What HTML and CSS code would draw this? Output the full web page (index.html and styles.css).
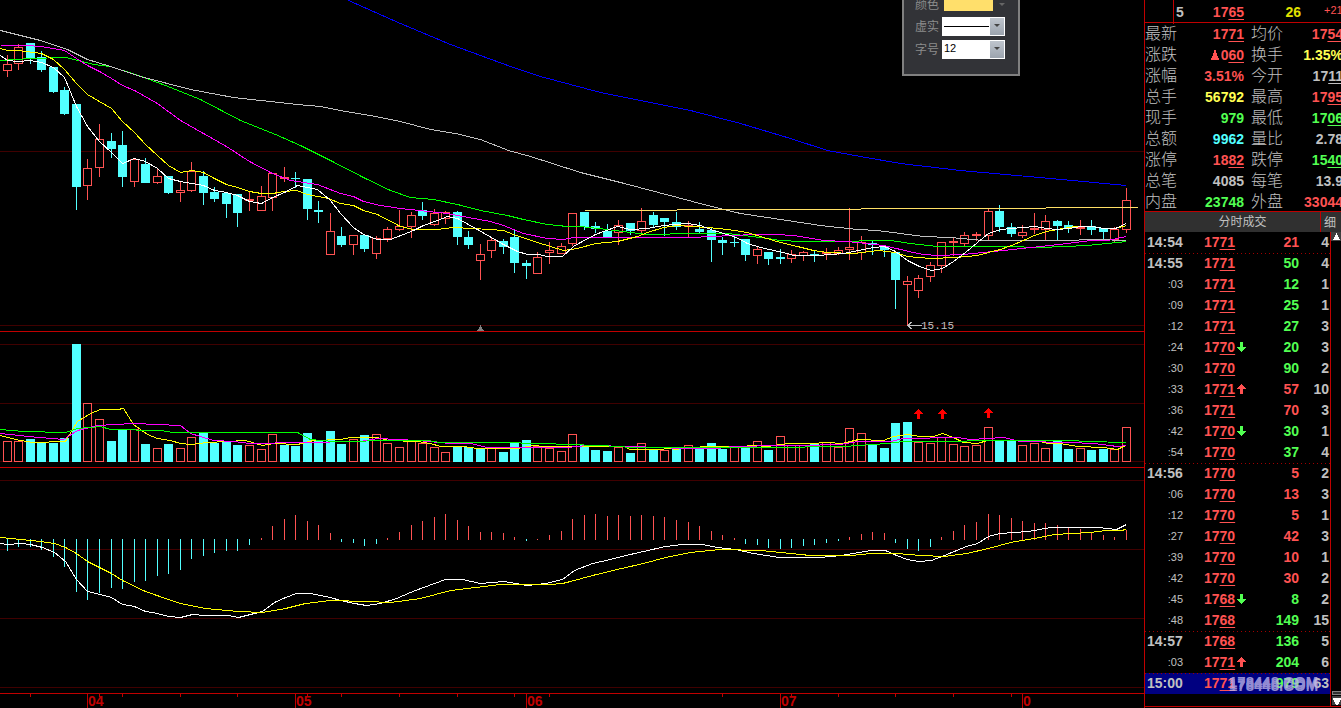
FILE: index.html
```html
<!DOCTYPE html>
<html lang="zh-CN">
<head>
<meta charset="utf-8">
<title>K线行情</title>
<link rel="stylesheet" href="styles.css">
</head>
<body>
<main class="terminal">
  <section class="charts" aria-label="K线图">
    <svg class="panel" id="price" viewBox="0 0 1144 332"></svg>
    <svg class="panel" id="volume" viewBox="0 332 1144 136"></svg>
    <svg class="panel" id="macd" viewBox="0 468 1144 226"></svg>
    <svg class="panel" id="axis" viewBox="0 694 1144 14"></svg>
    <form class="style-dialog">
      <div class="field">
        <label for="color">颜色</label>
        <button class="swatch" id="color" type="button" aria-label="颜色"></button>
        <span class="caret faint"></span>
      </div>
      <div class="field">
        <label for="dash">虚实</label>
        <span class="combo"><select class="line-select" id="dash"><option></option></select><span class="drop"><span class="caret"></span></span></span>
      </div>
      <div class="field">
        <label for="size">字号</label>
        <span class="combo"><select id="size"><option>12</option></select><span class="drop"><span class="caret"></span></span></span>
      </div>
    </form>
  </section>

  <aside class="quote">
    <div class="level">
      <span class="lv-no">5</span>
      <span class="lv-price red">17<u>65</u></span>
      <span class="lv-vol gold">26</span>
      <span class="lv-diff red">+21</span>
    </div>
    <dl class="stats">
      <dt>最新</dt><dd class="red">17<u>71</u></dd><dt>均价</dt><dd class="red">17<u>54</u></dd>
      <dt>涨跌</dt><dd class="red"><svg class="tri" viewBox="0 0 8 10"><path d="M3 0h2v3h1v3h1v2h1v2H0V8h1V6h1V3h1z"/></svg>0<u>60</u></dd><dt>换手</dt><dd class="yellow">1.35%</dd>
      <dt>涨幅</dt><dd class="red">3.51%</dd><dt>今开</dt><dd>17<u>11</u></dd>
      <dt>总手</dt><dd class="yellow">56792</dd><dt>最高</dt><dd class="red">17<u>95</u></dd>
      <dt>现手</dt><dd class="green">979</dd><dt>最低</dt><dd class="green">17<u>06</u></dd>
      <dt>总额</dt><dd class="cyan">9962</dd><dt>量比</dt><dd>2.78</dd>
      <dt>涨停</dt><dd class="red">18<u>82</u></dd><dt>跌停</dt><dd class="green">15<u>40</u></dd>
      <dt>总笔</dt><dd>4085</dd><dt>每笔</dt><dd>13.9</dd>
      <dt>内盘</dt><dd class="green">23748</dd><dt>外盘</dt><dd class="red">33044</dd>
    </dl>
    <header class="ticks-head"><h2>分时成交</h2><button type="button">细</button></header>
    <div class="ticks-wrap">
      <div class="ticks-body">
        <table class="ticks">
          <colgroup><col class="c-time"><col class="c-price"><col class="c-vol"><col class="c-count"><col></colgroup>
          <tbody id="ticks"></tbody>
        </table>
        <span class="watermark">178448.COM</span>
      </div>
      <div class="scroll">
        <svg class="scroll-up" viewBox="0 0 10 9"><path fill="#404040" d="M0 0h10v9H0z"/><path fill="#fff" d="M5 1h1v2h1v2h1v2h1v1H2V7h1V5h1V3h1z"/></svg>
        <svg class="scroll-down" viewBox="0 0 10 15"><path fill="#808080" d="M1 0h9v4H1z"/><path fill="#303030" d="M2 1h8v2H2z"/><path fill="#404040" d="M1 5h9v9H1z"/><path fill="#fff" d="M2 7h8v2H9v2H8v2H7v1H5v-1H4v-2H3V9H2z"/></svg>
      </div>
    </div>
  </aside>
</main>
<script src="app.js"></script>
</body>
</html>
```
FILE: styles.css
```css
* { box-sizing: border-box; }
body {
  margin: 0;
  background: #000;
  color: #c0c0c0;
  font-family: "Liberation Sans", "Noto Sans CJK SC", sans-serif;
  overflow: hidden;
}
.terminal { display: flex; align-items: stretch; min-height: 100vh; }
.charts { position: relative; flex: 1; min-width: 0; }
.panel { display: block; width: 100%; height: auto; shape-rendering: crispEdges; }
.grid { stroke: #400000; }
.frame { stroke: #c00000; }
.line { fill: none; stroke-width: 1; }
.low-label { fill: #c0c0c0; font: 11px "Liberation Mono", monospace; }
.month { fill: #c00000; font: bold 14px "Liberation Sans", sans-serif; }

.style-dialog {
  position: absolute;
  top: 0;
  left: 902px;
  width: 118px;
  padding: 0 13px 15px 11px;
  background: #323337;
  border: 2px solid #808080;
  border-top: 0;
  display: flex;
  flex-direction: column;
  gap: 4px;
}
.field { display: flex; align-items: center; height: 19px; }
.field:first-child { height: 13px; align-items: flex-start; }
.field:first-child label { line-height: 10px; }
.field label { width: 27px; font-size: 12px; line-height: 20px; color: #8c8c8c; white-space: nowrap; }
.swatch { width: 49px; height: 11px; margin: 0 6px 0 2px; padding: 0; border: 0; background: #ffdf6b; }
.combo { display: flex; width: 63px; height: 19px; background: #fff; padding: 1px; }
.combo select {
  appearance: none;
  flex: 1;
  min-width: 0;
  border: 0;
  border-radius: 0;
  padding: 0 0 3px 1px;
  background: #fff;
  color: #000;
  font: 11px "Liberation Sans", sans-serif;
}
.combo .line-select { background: linear-gradient(#000, #000) 1px 8px / 45px 1px no-repeat #fff; }
.drop { display: flex; justify-content: center; padding-top: 6px; width: 14px; background: linear-gradient(#bfc5cd, #9ca4ae); }
.caret { width: 0; height: 0; border: 3px solid transparent; border-top: 3px solid #444; border-bottom: 0; }
.caret.faint { border-top-color: #666; margin-top: 3px; }

.quote { width: 197px; border-left: 1px solid #c00000; overflow: hidden; font-size: 14px; font-weight: bold; display: flex; flex-direction: column; }
.red { color: #ff5252; }
.green { color: #52ff52; }
.yellow { color: #ffff52; }
.gold { color: #e0e000; }
.cyan { color: #52ffff; }
u { text-decoration: underline; text-decoration-thickness: 1px; text-underline-offset: 2px; text-decoration-skip-ink: none; }

.level { display: grid; grid-template-columns: 29px 70px 57px 1fr; height: 23px; line-height: 24px; border-bottom: 1px solid #c00000; }
.lv-no { border-left: 1px solid #c00000; margin-left: 28px; padding-left: 2px; }
.lv-price, .lv-vol { text-align: right; }
.lv-diff { font-size: 11px; font-weight: normal; line-height: 20px; padding-left: 23px; }

.stats { margin: 0; display: grid; grid-template-columns: 39px 60px 39px 60px; grid-auto-rows: 20px; row-gap: 1px; line-height: 22px; }
.stats dt { font-size: 16px; font-weight: 300; white-space: nowrap; }
.stats dt:nth-of-type(even) { padding-left: 7px; }
.stats dd { margin: 0; text-align: right; white-space: nowrap; }
.tri { width: 8px; height: 10px; fill: #ff5252; margin-right: 2px; }

.ticks-head { display: flex; height: 21px; background: #303030; border-top: 1px solid #c00000; }
.ticks-head h2 { flex: 1; margin: 0; padding-left: 20px; text-align: center; font-size: 12px; font-weight: normal; line-height: 20px; }
.ticks-head button { width: 21px; padding: 0 0 0 3px; border: 0; border-left: 1px solid #c00000; background: none; color: #c0c0c0; font: 12px/18px "Noto Sans CJK SC", sans-serif; text-align: left; }

.ticks-wrap { flex: 1; display: flex; border-bottom: 1px solid #c00000; margin-bottom: 1px; }
.ticks-body { position: relative; flex: 1; }
.ticks { table-layout: fixed; width: 100%; border-collapse: collapse; }
.c-time { width: 38px; }
.c-price { width: 65px; }
.c-vol { width: 51px; }
.c-count { width: 30px; }
.ticks td { height: 21px; padding: 0; line-height: 20px; vertical-align: top; white-space: nowrap; text-align: right; }
.ticks td.time { padding-left: 2px; text-align: left; }
.ticks td.sec { font-size: 11px; font-weight: normal; }
.ticks td.price { padding-left: 21px; text-align: left; }
.ticks .minute { background: repeating-linear-gradient(90deg, #a00000 0 1px, transparent 1px 4px) 0 0 / 100% 1px no-repeat; }
.ticks .current { background-color: #000080; }
.mark { width: 9px; height: 10px; margin-left: 2px; fill: currentColor; shape-rendering: crispEdges; }
.mark.green { color: #52ff52; }
.watermark { position: absolute; left: 84px; top: 441px; font-size: 15px; line-height: 21px; color: #b8b0e8; opacity: .8; text-shadow: 0 2px 0 #b8b0e8, 0 -2px 0 #b8b0e8; }
.scroll { width: 11px; border-left: 1px solid #c00000; display: flex; flex-direction: column; justify-content: space-between; }
.scroll svg { display: block; width: 10px; }
```
FILE: app.js
```js
const UP = '#ff5252', DOWN = '#52ffff';
const xs = i => Math.floor(7.15 + 11.54 * i);
const rect = (x, y, w, h, c) => `<rect x="${x}" y="${y}" width="${w}" height="${h}" fill="${c}"/>`;
const box = (x, y, w, h, c) => `<rect x="${x + .5}" y="${y + .5}" width="${w - 1}" height="${h - 1}" fill="none" stroke="${c}"/>`;
const grid = ys => ys.map(y => `<path class="grid" d="M0 ${y}.5H1144"/>`).join('');
const frame = y => `<path class="frame" d="M0 ${y}.5H1144"/>`;
const line = (color, pts) => {
  const p = pts.trim().split(/\s+/).map(s => s.split(',').map(n => +n + .5).join(','));
  return `<polyline class="line" stroke="${color}" points="${p.join(' ')}"/>`;
};

// direction, body top, body bottom, high, low
const candles = `r 64 71 55 77;r 47 64 44 70;c 43 59 43 64;c 57 70 51 72;c 67 92 67 93;c 90 114 87 115;c 104 187 104 210;r 168 186 159 200;r 139 168 124 177;c 141 149 133 158;c 145 177 131 187;r 159 182 159 187;c 164 183 158 183;r 176 183 169 184;c 176 193 176 194;r 190 193 181 202;r 171 191 162 192;c 176 193 171 205;c 192 199 187 202;c 193 204 193 218;c 194 213 194 227;r 199 201 192 211;r 196 211 186 211;r 173 198 173 211;r 177 179 167 182;c 178 179 172 188;c 179 209 179 220;c 210 212 201 223;r 231 255 213 255;c 236 245 227 247;r 235 245 235 255;c 235 249 235 252;r 238 254 236 259;r 229 239 227 242;r 226 230 210 231;r 215 227 212 238;c 210 216 202 220;r 213 225 209 226;r 212 219 211 224;c 212 237 211 245;c 237 245 231 249;r 254 261 244 280;r 240 251 238 258;c 241 247 239 254;c 237 263 230 273;c 263 266 260 279;r 257 274 252 274;r 250 253 242 264;r 246 254 243 254;r 213 244 213 246;c 212 227 212 230;c 226 229 222 233;c 231 237 224 238;r 225 233 220 245;c 223 231 223 235;r 221 231 208 234;c 215 225 212 227;c 218 222 218 236;c 222 227 212 230;r 225 227 221 237;c 229 232 222 234;c 230 240 228 262;c 240 243 237 255;c 242 243 236 247;c 239 255 239 261;r 249 256 246 264;c 252 259 252 265;c 257 259 249 264;r 254 259 250 263;r 252 256 251 261;c 254 256 251 262;r 252 254 248 260;r 250 254 247 255;r 247 250 208 260;r 242 253 236 260;c 243 245 241 255;c 247 250 245 257;c 252 280 252 309;r 281 285 276 326;r 278 291 275 298;r 265 277 262 282;r 242 266 242 273;r 241 243 237 256;r 235 244 232 247;r 234 236 232 241;r 211 236 209 240;c 211 227 205 232;c 227 234 223 237;r 232 236 225 238;r 228 230 213 234;r 221 230 215 240;c 221 226 220 240;c 225 228 221 233;r 227 229 220 235;c 226 230 220 235;c 228 232 228 240;r 229 240 227 242;r 200 230 188 233`.split(';');

document.getElementById('price').innerHTML = grid([151, 325]) + frame(331) +
  candles.map((s, i) => {
    const [d, ...v] = s.split(' '), [t, b, h, l] = v.map(Number), x = xs(i);
    if (d === 'c') return rect(x, h, 1, l - h, DOWN) + rect(x - 4, t, 9, b - t, DOWN);
    return rect(x, h, 1, Math.max(0, t - h), UP) + rect(x, b, 1, Math.max(0, l - b), UP) + box(x - 4, t, 9, b - t, UP);
  }).join('') +
  line('#0000ff', '348,0 400,23 450,44 480,55 510,66 540,76 570,84 600,92 650,102 690,110 740,123 790,138 827,150 860,156 900,163 960,170 1050,178 1126,185') +
  line('#00ff00', '0,60 30,58 65,57 78,60 93,64 110,66 138,75 165,85 200,99 240,120 275,134 300,145 310,150 330,160 363,177 390,190 410,197 433,199 457,204 480,210 507,215 523,219 547,224 567,226 580,226 607,229 630,232 647,234 693,233 727,233 760,237 780,240 800,241 850,241 867,240 890,240 910,243 937,246 1007,246 1040,247 1087,245 1126,241') +
  line('#c0c0c0', '0,30 20,35 40,40 67,49 87,59 110,66 140,76 190,89 233,97 297,104 320,106 345,111 375,116 400,121 430,129 455,133 480,139 508,150 530,156 580,172 620,182 677,197 707,205 740,213 780,219 820,225 857,229 877,230 923,236 950,237 983,240 1060,240 1097,239 1126,240') +
  line('#ff00ff', '0,45 25,45 41,46 64,50 76,58 87,65 99,71 111,78 122,85 134,90 157,103 180,120 203,133 226,146 249,161 272,173 290,180 317,184 340,193 353,196 363,201 380,205 400,208 447,213 457,215 490,221 503,225 523,233 547,238 563,239 573,237 690,237 711,236 753,234 775,234 793,235 823,240 845,241 857,242 883,245 913,252 923,254 937,255 963,254 993,251 1040,246 1067,243 1090,240 1107,240 1126,236') +
  line('#ffff00', '0,48 7,50 18,50 41,53 53,59 64,69 76,83 87,94 99,101 111,108 122,121 134,132 145,144 157,155 168,165 180,172 191,170 203,172 214,178 226,184 237,187 249,191 261,193 272,193 284,191 296,190 307,194 328,198 340,203 353,205 363,210 377,214 400,226 413,229 437,229 453,227 490,229 503,230 513,234 537,242 563,250 577,248 595,243 617,241 637,236 647,232 663,227 677,225 707,227 727,229 747,232 763,237 780,242 797,246 813,250 827,252 853,253 878,250 895,252 907,256 930,258 955,257 977,255 988,252 1000,249 1011,245 1023,240 1034,235 1046,231 1057,229 1075,226 1092,226 1103,228 1115,228 1126,225') +
  line('#ffffff', '0,55 7,60 18,61 30,60 41,62 53,67 64,77 76,106 87,126 99,141 111,152 122,163 134,158 145,161 157,168 168,178 180,181 191,183 203,185 214,190 226,192 237,195 249,201 261,203 272,197 284,192 297,185 317,189 330,200 340,213 353,227 363,234 377,239 390,239 403,234 413,230 423,225 437,220 447,216 457,218 477,229 503,244 517,251 527,254 538,254 547,256 562,256 573,246 580,242 595,234 617,226 630,229 647,228 663,225 687,223 700,225 713,230 730,235 740,239 747,243 760,247 787,253 793,255 817,255 843,253 863,249 873,247 884,246 895,251 907,260 919,266 931,270 942,268 953,261 965,252 977,242 988,233 1000,229 1011,228 1034,226 1046,228 1057,229 1069,228 1080,226 1092,226 1103,228 1115,228 1126,223') +
  line('#ffe066', '584,210 676,210 677,209 860,209 861,208 1045,208 1046,207 1137,207') +
  '<path fill="#808080" d="M480 325h1v2h1v2h1v1h1v1h-7v-1h1v-1h1v-2h1z"/>' +
  '<path fill="none" stroke="#c0c0c0" d="M922 325.5H908M911.5 322L908 325.5L911.5 329"/>' +
  '<text class="low-label" x="921" y="329">15.15</text>';

// direction and top edge of each volume bar
const volumes = 'r441 r441 c439 c442 c443 c438 c344 r403 r419 c441 c429 r429 c444 r448 c444 r448 r437 c433 c443 c442 c445 r445 r449 r434 c445 c446 c433 c441 c431 c444 r439 c435 r434 r443 r447 r440 r443 r447 r452 c446 c447 c448 r447 c452 c442 c440 r446 r448 r451 r434 c445 c450 c451 r447 c453 r443 c450 r450 c448 r445 c448 c443 c449 r447 c447 r441 c450 r436 r445 r445 c444 r442 r447 r428 r433 c444 c448 c423 c422 r442 r443 r437 r444 r446 r445 r427 c440 c440 r445 r443 r448 c440 c449 r448 c450 c449 r449 r427'.split(' ');
const signal = (x, y) => `<path fill="#ff0000" d="M${x} ${y}h1v1h1v1h1v1h1v1h1v1h-3v5h-3v-5h-3v-1h1v-1h1v-1h1v-1h1z"/>`;

document.getElementById('volume').innerHTML = grid([344, 403, 461]) + frame(467) +
  volumes.map((s, i) => {
    const y = +s.slice(1), x = xs(i) - 4;
    return s[0] === 'c' ? rect(x, y, 9, 462 - y, DOWN) : box(x, y, 9, 462 - y, UP);
  }).join('') +
  line('#ffff00', '0,435 15,439 32,442 65,441 77,421 90,413 100,409 117,409 123,408 133,424 147,434 157,438 170,440 180,443 190,444 207,442 245,440 262,445 273,443 297,444 313,440 340,439 350,437 377,437 388,440 417,441 430,443 440,446 463,446 477,448 517,448 533,445 543,446 555,446 623,446 630,449 660,449 667,448 677,449 683,447 717,446 740,446 753,445 767,446 780,444 790,443 810,443 827,442 842,443 858,439 883,440 893,436 907,434 920,436 933,436 942,433 953,437 963,442 977,443 987,440 1037,440 1047,443 1060,443 1077,446 1103,447 1117,449 1125,445') +
  line('#ff00ff', '0,433 28,436 63,439 77,430 97,425 133,423 180,425 190,433 213,440 233,441 250,443 300,442 360,441 377,438 417,440 450,443 470,443 487,447 567,447 587,445 633,446 683,448 717,448 733,446 780,445 800,445 840,444 857,441 890,441 903,438 957,437 970,439 987,438 1003,437 1020,441 1070,442 1093,443 1117,446 1126,445') +
  line('#00ff00', '0,429 23,431 65,432 77,428 100,426 110,429 160,430 173,432 297,432 310,439 333,441 400,440 427,440 440,442 497,442 543,443 567,444 600,445 633,447 767,447 843,446 887,443 903,441 947,441 987,440 1070,440 1087,441 1126,442') +
  signal(918, 409) + signal(942, 409) + signal(988, 408);

// far end of each MACD bar, measured from the zero line
const bars = [551,547,547,550,557,567,592,600,593,588,589,582,581,576,574,570,559,556,553,551,551,545,538,526,519,515,521,525,533,542,543,546,544,538,532,525,521,517,514,520,526,532,532,533,537,541,539,535,531,519,515,514,516,515,516,515,516,517,520,522,526,531,535,538,544,545,548,549,548,546,545,543,541,537,534,532,533,543,549,551,547,537,531,525,522,514,515,518,521,523,523,525,527,529,532,535,537,530];

document.getElementById('macd').innerHTML = grid([480, 549, 618, 687]) + frame(693) +
  bars.map((y, i) => y < 540 ? rect(xs(i), y, 1, 540 - y, UP) : rect(xs(i), 539, 1, y - 539, DOWN)).join('') +
  line('#ffffff', '0,543 7,544 20,543 30,544 42,547 54,552 65,561 76,579 87,591 100,594 111,597 122,604 134,606 145,611 157,613 168,616 180,617 192,614 205,615 228,615 238,617 250,614 262,611 274,602 285,597 296,593 310,593 320,595 330,597 340,600 354,603 366,605 380,603 396,598 410,592 423,587 445,579 462,579 480,583 503,581 515,583 527,585 545,583 562,579 574,570 592,563 610,559 621,556 643,551 665,546 682,544 702,544 717,547 735,549 753,553 779,557 819,557 841,555 871,550 885,550 896,555 907,559 918,561 931,560 944,555 966,546 977,543 988,536 999,533 1028,531 1050,527 1098,527 1116,529 1126,524') +
  line('#ffff00', '0,537 40,541 54,543 65,547 76,553 87,561 111,573 122,580 145,591 168,599 180,603 205,608 238,611 262,612 285,608 305,603 330,600 366,601 390,602 420,598 450,590 475,587 500,584 550,584 562,583 570,581 592,575 621,568 643,563 665,557 690,552 720,549 760,550 780,552 810,555 850,555 871,553 896,553 920,555 944,556 966,553 988,548 1010,542 1034,538 1054,534 1090,532 1105,530 1120,530 1126,529');

const months = [[87, '04'], [295, '05'], [526, '06'], [780, '07'], [1022, '0']];
document.getElementById('axis').innerHTML =
  [30, 99, 122, 180, 237, 307, 341, 399, 457, 514, 549, 722, 791, 838, 895, 953, 1011].map(x => rect(x, 694, 1, 3, '#c00000')).join('') +
  months.map(([x, t]) => rect(x, 694, 1, 14, '#c00000') + `<text class="month" x="${x + 1}" y="706">${t}</text>`).join('');

// time, price, move, volume, colour, count
const ticks = `14:54 1771 - 21 red 4;14:55 1771 - 50 green 4;:03 1771 - 12 green 1;:09 1771 - 25 green 1;:12 1771 - 27 green 3;:24 1770 d 20 green 3;:30 1770 - 90 green 2;:33 1771 u 57 red 10;:36 1771 - 70 red 3;:42 1770 d 30 green 1;:54 1770 - 37 green 4;14:56 1770 - 5 red 2;:06 1770 - 13 red 3;:12 1770 - 5 red 1;:27 1770 - 42 red 3;:39 1770 - 10 red 1;:42 1770 - 30 red 2;:45 1768 d 8 green 2;:48 1768 - 149 green 15;14:57 1768 - 136 green 5;:03 1771 u 204 green 6;15:00 1771 - 979 green 63`.split(';');
const marks = {
  '-': '',
  u: '<svg class="mark" viewBox="0 0 9 10"><path d="M4 0h1v1h1v1h1v1h1v1h1v1H6v5H3V5H0V4h1V3h1V2h1V1h1z"/></svg>',
  d: '<svg class="mark green" viewBox="0 0 9 10"><path d="M3 0h3v5h3v1H8v1H7v1H6v1H5v1H4V9H3V8H2V7H1V6H0V5h3z"/></svg>'
};
document.getElementById('ticks').innerHTML = ticks.map((row, i) => {
  const [t, p, m, v, c, n] = row.split(' ');
  const full = t[0] !== ':';
  const cls = (full && i ? 'minute' : '') + (t === '15:00' ? ' current' : '');
  return `<tr class="${cls}"><td class="${full ? 'time' : 'sec'}">${t}</td><td class="price red">${p.slice(0, 2)}<u>${p.slice(2)}</u>${marks[m]}</td><td class="${c}">${v}</td><td>${n}</td><td></td></tr>`;
}).join('');
```
